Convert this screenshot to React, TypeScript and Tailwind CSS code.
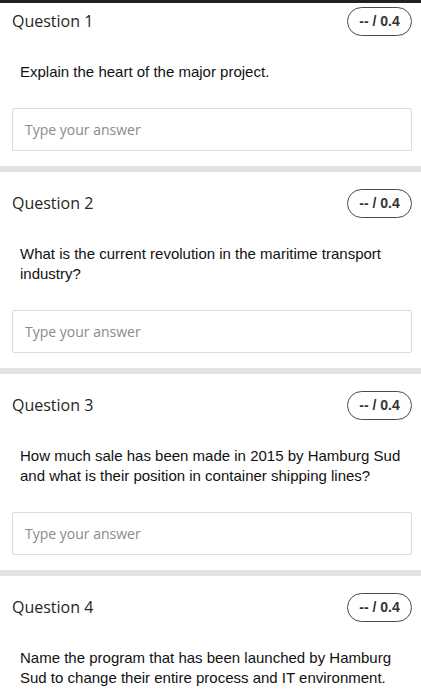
const questions = [
  { id: 1, text: "Explain the heart of the major project." },
  { id: 2, text: "What is the current revolution in the maritime transport industry?" },
  {
    id: 3,
    text: "How much sale has been made in 2015 by Hamburg Sud and what is their position in container shipping lines?",
  },
  {
    id: 4,
    text: "Name the program that has been launched by Hamburg Sud to change their entire process and IT environment.",
  },
];

const QuestionCard = ({ id, text, first }: { id: number; text: string; first?: boolean }) => {
  return (
    <div className={`bg-white pb-[15px] pl-3 pr-[9px] ${first ? "pt-[4px]" : "pt-[17px]"}`}>
      <div className="flex h-[28px] items-center justify-between">
        <h3 className="font-['Open_Sans',sans-serif] text-[16px] text-[#262626]">Question {id}</h3>
        <div className="flex h-[29px] w-[65px] items-center justify-center rounded-full border-[1.5px] border-[#4a4a4a] font-['Liberation_Sans',Arial,sans-serif] text-[14px] font-semibold text-[#333]">
          -- / 0.4
        </div>
      </div>
      <p className="mt-[27px] pl-2 font-['Liberation_Sans',Arial,sans-serif] text-[15px] leading-[20px] text-[#111]">
        {text}
      </p>
      <div className="mt-[26px] flex h-[43px] items-center rounded-[2px] border border-[#dcdcdc] px-3">
        <span className="font-['Open_Sans',sans-serif] text-[14px] text-[#8a8a8a]">Type your answer</span>
      </div>
    </div>
  );
};

const App = () => {
  return (
    <div className="min-h-screen w-full bg-white">
      <div className="h-[3px] w-full bg-[#222]"></div>
      {questions.map((q, i) => (
        <div key={q.id}>
          {i > 0 ? <div className="h-[6px] w-full bg-[#e2e2e2]"></div> : ""}
          <QuestionCard id={q.id} text={q.text} first={i === 0} />
        </div>
      ))}
    </div>
  );
};

export default App;
